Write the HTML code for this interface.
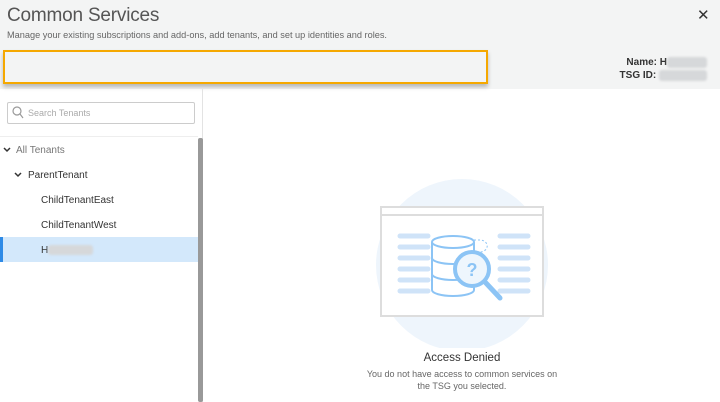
<!DOCTYPE html>
<html><head><style>
*{margin:0;padding:0;box-sizing:border-box}
body{width:720px;height:402px;overflow:hidden;background:#fff;font-family:"Liberation Sans",sans-serif;position:relative}
.hdr{position:absolute;left:0;top:0;width:720px;height:89px;background:#f3f4f4}
.t{position:absolute;left:7px;top:5px;font-size:19px;color:#555;font-weight:300;letter-spacing:-0.2px}
.s{position:absolute;left:7px;top:30px;font-size:9.2px;color:#666}
.x{position:absolute;left:697px;top:6px;font-size:15px;color:#333}
.ob{position:absolute;left:3px;top:50px;width:485px;height:34px;border:2px solid #f5a800;box-shadow:0 3px 4px rgba(0,0,0,.25)}
.nm{position:absolute;right:13px;font-size:10px;color:#333;font-weight:bold}
.blur{display:inline-block;width:40px;height:11px;background:#d6d8da;vertical-align:middle;border-radius:3px;filter:blur(1px)}
.left{position:absolute;left:0;top:89px;width:203px;height:313px;border-right:1px solid #e3e3e3}
.sr{position:absolute;left:7px;top:102px;width:188px;height:22px;border:1px solid #ccc;border-radius:2px;font-size:9px;color:#aaa;padding:5px 0 0 20px}
.sb{position:absolute;left:198px;top:138px;width:5px;height:264px;background:#999;border-radius:2px}
.ln{position:absolute;left:0;top:136px;width:198px;height:1px;background:#eee}
.it{position:absolute;font-size:10px;color:#333}
.sel{position:absolute;left:0;top:237px;width:198px;height:25px;background:#d3e8fb;border-left:3px solid #2e8ae6}
.c{position:absolute;font-size:10px}
</style></head><body>
<div class="hdr"></div>
<div class="t">Common Services</div>
<div class="s">Manage your existing subscriptions and add-ons, add tenants, and set up identities and roles.</div>
<div class="x">✕</div>
<div class="ob"></div>
<div class="nm" style="top:57px">Name: H<span class="blur"></span></div>
<div class="nm" style="top:70px">TSG ID: <span class="blur" style="width:48px"></span></div>
<div class="left"></div>
<div class="sr">Search Tenants</div>
<svg style="position:absolute;left:12px;top:106px" width="12" height="13"><circle cx="5" cy="5" r="4" fill="none" stroke="#999" stroke-width="1.2"/><line x1="8" y1="8" x2="11" y2="12" stroke="#999" stroke-width="1.2"/></svg>
<div class="ln"></div>
<div class="sb"></div>
<div class="sel"></div>
<svg style="position:absolute;left:3px;top:147px" width="8" height="6"><path d="M1 1 L4 4 L7 1" fill="none" stroke="#333" stroke-width="1.5"/></svg>
<div class="it" style="left:16px;top:145px;color:#777">All Tenants</div>
<svg style="position:absolute;left:14px;top:172px" width="8" height="6"><path d="M1 1 L4 4 L7 1" fill="none" stroke="#333" stroke-width="1.5"/></svg>
<div class="it" style="left:28px;top:170px">ParentTenant</div>
<div class="it" style="left:41px;top:195px">ChildTenantEast</div>
<div class="it" style="left:41px;top:220px">ChildTenantWest</div>
<div class="it" style="left:41px;top:245px">H<span class="blur" style="width:45px;height:10px"></span></div>
<svg style="position:absolute;left:370px;top:178px" width="190" height="170">
<circle cx="92" cy="87" r="86" fill="#eef5fc"/>
<rect x="11" y="29" width="162" height="109" fill="#fff" stroke="#ddd" stroke-width="2"/>
<line x1="11" y1="37" x2="173" y2="37" stroke="#ddd" stroke-width="2"/>
<g stroke="#cfe3f8" stroke-width="5" stroke-linecap="round">
<line x1="30" y1="58" x2="58" y2="58"/><line x1="30" y1="69" x2="58" y2="69"/><line x1="30" y1="80" x2="58" y2="80"/><line x1="30" y1="91" x2="58" y2="91"/><line x1="30" y1="102" x2="58" y2="102"/><line x1="30" y1="113" x2="58" y2="113"/>
<line x1="130" y1="58" x2="158" y2="58"/><line x1="130" y1="69" x2="158" y2="69"/><line x1="130" y1="80" x2="158" y2="80"/><line x1="130" y1="91" x2="158" y2="91"/><line x1="130" y1="102" x2="158" y2="102"/><line x1="130" y1="113" x2="158" y2="113"/>
</g>
<g fill="#fff" stroke="#8cc4f5" stroke-width="2">
<path d="M62 64 v48 a21 6 0 0 0 42 0 v-48"/>
<ellipse cx="83" cy="64" rx="21" ry="6"/>
<path d="M62 80 a21 6 0 0 0 42 0 M62 96 a21 6 0 0 0 42 0" fill="none"/>
</g>
<path d="M104 62 h6 a6 5 0 0 1 0 12" fill="none" stroke="#8cc4f5" stroke-dasharray="2 2"/>
<line x1="115" y1="104" x2="130" y2="120" stroke="#8cc4f5" stroke-width="5" stroke-linecap="round"/>
<circle cx="102" cy="91" r="17" fill="#eef6fd" stroke="#8cc4f5" stroke-width="4"/>
<text x="102" y="98" font-size="18" font-weight="bold" fill="#8cc4f5" text-anchor="middle" font-family="Liberation Sans">?</text>
</svg>
<div class="c" style="left:362px;width:200px;text-align:center;top:352px;font-size:11.5px;color:#333">Access Denied</div>
<div class="c" style="left:362px;width:200px;text-align:center;top:368px;font-size:9px;color:#666;line-height:12px">You do not have access to common services on<br>the TSG you selected.</div>
</body></html>
